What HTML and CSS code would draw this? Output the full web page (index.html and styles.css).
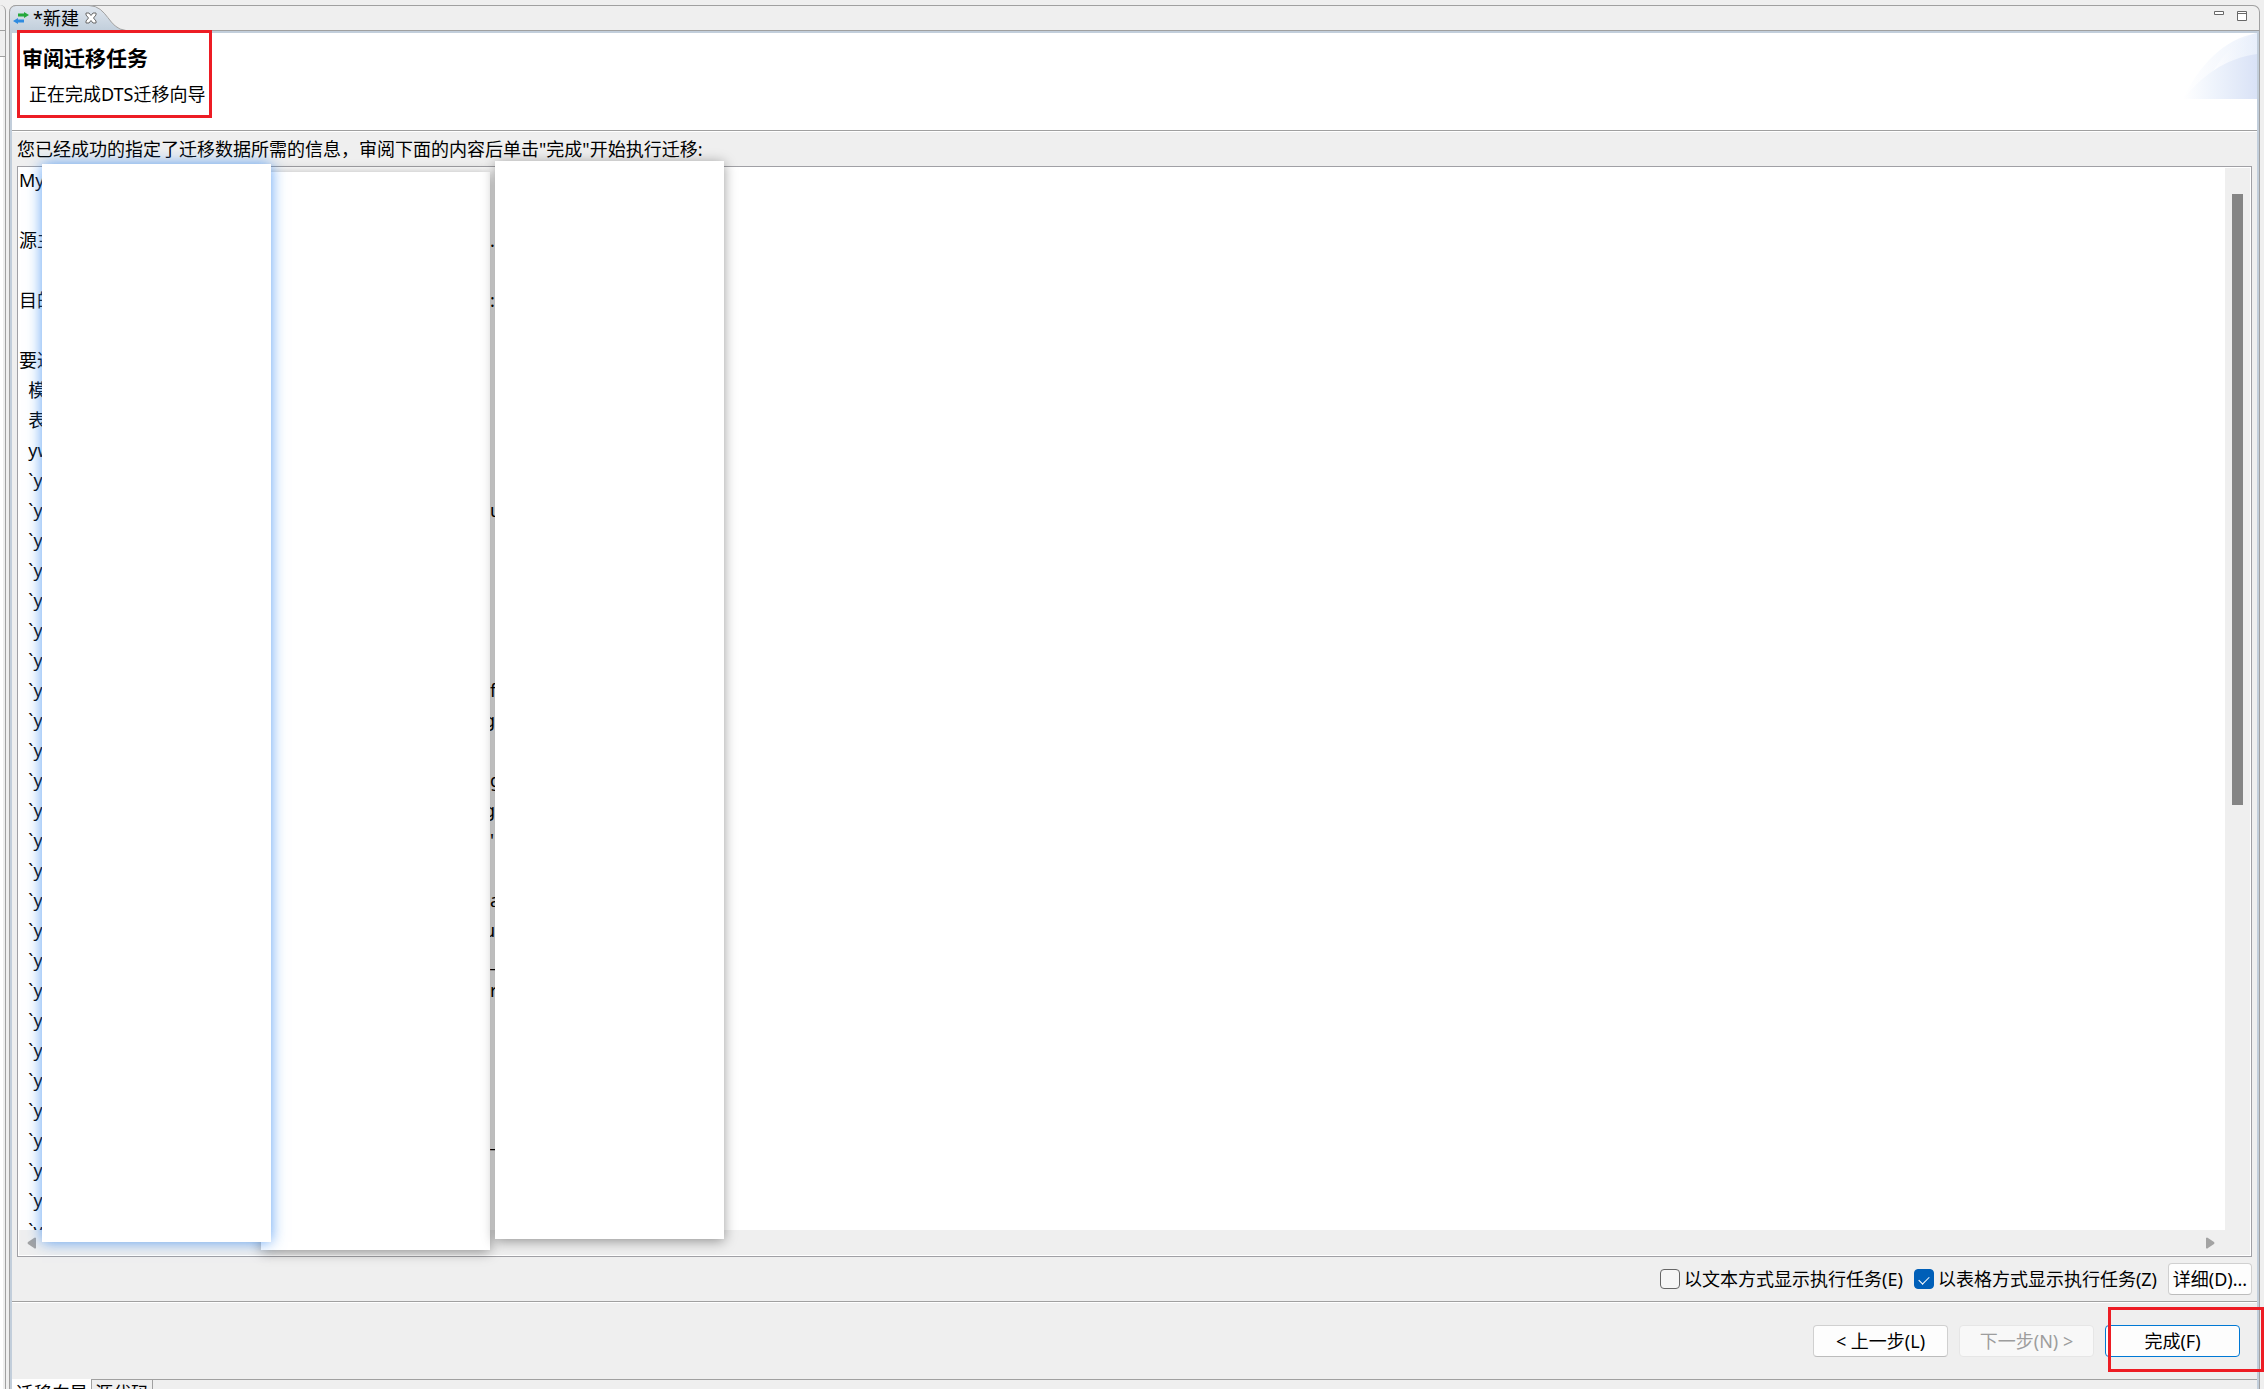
FILE: index.html
```html
<!DOCTYPE html>
<html lang="zh-CN">
<head>
<meta charset="utf-8">
<title>新建</title>
<link rel="stylesheet" href="styles.css">
</head>
<body>
<div class="workbench">
  <aside class="side-view"><div class="side-tabs"></div><div class="side-tools"></div><div class="side-body"></div></aside>
  <main class="editor">
    <div class="tab-bar">
      <div class="tab">
        <svg class="tab-shape" width="120" height="26" viewBox="0 0 120 26" aria-hidden="true">
          <defs><linearGradient id="tabFill" x1="0" y1="0" x2="0" y2="1"><stop offset="0" stop-color="#dfe6ee"/><stop offset="1" stop-color="#c1cedb"/></linearGradient></defs>
          <path d="M0 26V7Q1 1 7 .5H80C99 1 99 24 117 25.500V26Z" fill="url(#tabFill)"/>
          <path d="M.5 26V7Q1 1 7 .5H80C99 1 99 24 117 25.500" fill="none" stroke="#a0a0a0"/>
        </svg>
        <svg class="tab-icon" width="16" height="12" viewBox="0 0 16 12" aria-hidden="true"><path d="M5 1.500H11V0L16 3L11 6V4.500H5Z" fill="#25a83c"/><path d="M11 7.500H5V6L0 9L5 12V10.500H11Z" fill="#2f8be0"/></svg>
        <span class="tab-title">*新建</span>
        <button class="tab-close" aria-label="关闭"><svg width="12" height="12" viewBox="0 0 12 12"><path d="M1 1H4L6 3.500L8 1H11V3L8.500 6L11 9V11H8L6 8.500L4 11H1V9L3.500 6L1 3Z" fill="#fff" stroke="#686868"/></svg></button>
      </div>
      <div class="window-tools">
        <button aria-label="最小化"><svg width="10" height="10" viewBox="0 0 10 10"><path d="M.5.5H9.500V3.500H.5Z" fill="#fff" stroke="#686868"/></svg></button>
        <button aria-label="最大化"><svg width="10" height="10" viewBox="0 0 10 10"><path d="M.5.5H9.500V9.500H.5ZM.5 2.500H9.500" fill="#fff" stroke="#686868"/></svg></button>
      </div>
    </div>
    <div class="page">
      <header class="banner">
        <div class="banner-text">
          <h1>审阅迁移任务</h1>
          <p>正在完成DTS迁移向导</p>
        </div>
        <svg class="banner-art" width="74" height="66" viewBox="0 0 74 66" aria-hidden="true">
          <defs>
            <linearGradient id="artA"><stop offset="0" stop-color="#fff"/><stop offset="1" stop-color="#e4ecfa"/></linearGradient>
            <linearGradient id="artB"><stop offset="0" stop-color="#fff"/><stop offset=".4" stop-color="#eff4fc"/><stop offset="1" stop-color="#d9e2f6"/></linearGradient>
          </defs>
          <path d="M0 66C15 34 40 6 74 0V66Z" fill="url(#artA)" opacity=".7"/>
          <path d="M30 38C42 20 55 5 74 0V66H30Z" fill="url(#artA)" opacity=".6"/>
          <path d="M0 66C18 44 42 25 74 21V66Z" fill="url(#artB)"/>
        </svg>
      </header>
      <section class="content">
        <p class="message" id="summary-label">您已经成功的指定了迁移数据所需的信息，审阅下面的内容后单击"完成"开始执行迁移:</p>
        <div class="summary" role="region" aria-labelledby="summary-label">
          <div class="lines">
            <div class="line">My</div>
            <div class="line"></div>
            <div class="line">源主<span class="tail">.</span></div>
            <div class="line"></div>
            <div class="line">目的<span class="tail">:</span></div>
            <div class="line"></div>
            <div class="line">要迁</div>
            <div class="line">  模</div>
            <div class="line">  表</div>
            <div class="line">  yw</div>
            <div class="line">  `y</div>
            <div class="line">  `y<span class="tail">u</span></div>
            <div class="line">  `y</div>
            <div class="line">  `y</div>
            <div class="line">  `y</div>
            <div class="line">  `y</div>
            <div class="line">  `y</div>
            <div class="line">  `y<span class="tail">f</span></div>
            <div class="line">  `y<span class="tail end">g</span></div>
            <div class="line">  `y</div>
            <div class="line">  `y<span class="tail">g</span></div>
            <div class="line">  `y<span class="tail end">g</span></div>
            <div class="line">  `y<span class="tail">'</span></div>
            <div class="line">  `y</div>
            <div class="line">  `y<span class="tail">a</span></div>
            <div class="line">  `y<span class="tail end">u</span></div>
            <div class="line">  `y<span class="tail">_</span></div>
            <div class="line">  `y<span class="tail">r</span></div>
            <div class="line">  `y</div>
            <div class="line">  `y</div>
            <div class="line">  `y</div>
            <div class="line">  `y</div>
            <div class="line">  `y<span class="tail">_</span></div>
            <div class="line">  `y</div>
            <div class="line">  `y</div>
            <div class="line">  `y</div>
          </div>
          <div class="v-scroll"><div class="v-thumb"></div></div>
          <div class="h-scroll">
            <svg width="9" height="12" viewBox="0 0 9 12" aria-hidden="true"><path d="M9 1V11Q8 12 7 11L1 7Q0 6 1 5L7 1Q8 0 9 1Z" fill="#a3a3a3"/></svg>
            <svg width="9" height="12" viewBox="0 0 9 12" aria-hidden="true"><path d="M0 1V11Q1 12 2 11L8 7Q9 6 8 5L2 1Q1 0 0 1Z" fill="#a3a3a3"/></svg>
          </div>
        </div>
        <div class="options">
          <label><input type="checkbox">以文本方式显示执行任务(E)</label>
          <label><input type="checkbox" checked>以表格方式显示执行任务(Z)</label>
          <button class="btn btn-detail">详细(D)...</button>
        </div>
      </section>
      <footer class="actions">
        <button class="btn">&lt; 上一步(L)</button>
        <button class="btn" disabled>下一步(N) &gt;</button>
        <button class="btn btn-default">完成(F)</button>
      </footer>
      <nav class="page-tabs"><a class="current" href="#wizard">迁移向导</a><a href="#source">源代码</a></nav>
    </div>
  </main>
</div>
<div class="cover cover-middle"></div>
<div class="cover cover-selected"></div>
<div class="cover cover-right"></div>
<div class="mark mark-title"></div>
<div class="mark mark-finish"></div>
</body>
</html>
```
FILE: styles.css
```css
* { box-sizing: border-box; }

body {
  margin: 0;
  height: 100vh;
  overflow: hidden;
  position: relative;
  background: #efefef;
  color: #000;
  font: 18px/30px "Noto Sans", "Noto Sans CJK SC", sans-serif;
}

h1, p { margin: 0; }

button, input { font: inherit; color: inherit; margin: 0; }

.workbench {
  display: flex;
  gap: 3px;
  height: 100vh;
  padding: 5px 4px 0 0;
}

/* neighbouring view, only its right edge is visible */
.side-view {
  flex: 0 0 6px;
  display: flex;
  flex-direction: column;
  border-right: 1px solid #a0a0a0;
  border-top-right-radius: 6px;
}
.side-tabs { height: 26px; border-bottom: 1px solid #a0a0a0; }
.side-tools { height: 26px; border-bottom: 1px solid #a0a0a0; }
.side-body { flex: 1; margin-right: 2px; background: #fff; }

.editor {
  flex: 1;
  min-width: 0;
  display: flex;
  flex-direction: column;
  border: 1px solid #a0a0a0;
  border-bottom: 0;
  border-radius: 7px 7px 0 0;
}

.tab-bar {
  flex: 0 0 25px;
  display: flex;
  justify-content: space-between;
  border-bottom: 1px solid #a0a0a0;
}
.tab {
  position: relative;
  display: flex;
  align-items: center;
  gap: 4px;
  width: 120px;
  padding-left: 3px;
}
.tab-shape { position: absolute; left: -1px; top: -1px; }
.tab-icon, .tab-title, .tab-close { position: relative; }
.tab-title { line-height: 24px; }
.tab-close, .window-tools button {
  display: flex;
  padding: 0;
  border: 0;
  background: none;
}
.tab-close { padding-left: 2px; }
.window-tools { display: flex; gap: 13px; padding: 5px 12px 0 0; align-items: flex-start; }

.page {
  flex: 1;
  min-height: 0;
  display: flex;
  flex-direction: column;
  border: 2px solid #c2cedb;
  border-bottom: 0;
}

.banner {
  flex: 0 0 98px;
  display: flex;
  justify-content: space-between;
  align-items: flex-start;
  background: #fff;
  border-bottom: 1px solid #a0a0a0;
}
.banner-text { padding: 10px; }
.banner-text h1 { font-size: 21px; line-height: 30px; font-weight: 700; }
.banner-text p { padding: 6px 7px; }

.content {
  flex: 1;
  min-height: 0;
  display: flex;
  flex-direction: column;
  padding: 2px 5px 0;
  border-top: 1px solid #fff;
  border-bottom: 1px solid #a0a0a0;
}

.message { padding-bottom: 2px; }

.summary {
  flex: 1;
  min-height: 0;
  display: grid;
  grid-template: minmax(0, 1fr) 25px / minmax(0, 1fr) 25px;
  padding: 1px;
  background: #fff;
  border: 1px solid #a0a0a5;
}
.lines { overflow: hidden; }
.line {
  display: flex;
  height: 30px;
  line-height: 24px;
  white-space: pre;
  position: relative;
}
/* line ends showing between the cover sheets */
.tail {
  position: absolute;
  left: 471px;
  width: 5px;
  overflow: hidden;
}
.tail.end { display: flex; justify-content: flex-end; }

.v-scroll { background: #efefef; padding: 26px 7px 0; }
.v-thumb { height: 59%; background: #858585; }
.h-scroll {
  grid-column: 1 / -1;
  display: flex;
  justify-content: space-between;
  align-items: center;
  padding: 0 35px 0 8px;
  background: #efefef;
}

.options {
  display: flex;
  justify-content: flex-end;
  align-items: center;
  gap: 11px;
  padding: 6px 0;
}
.options label { display: flex; align-items: center; gap: 4px; }
.options input {
  appearance: none;
  width: 20px;
  height: 20px;
  border: 1px solid #666;
  border-radius: 4px;
  background: #f6f6f6;
}
.options input:checked {
  border-color: #005fb8;
  background: #005fb8;
  display: grid;
  place-items: center;
}
.options input:checked::before {
  content: "";
  width: 9px;
  height: 5px;
  border: solid #fff;
  border-width: 0 0 1px 1px;
  transform: rotate(-45deg);
}

.btn {
  width: 135px;
  height: 32px;
  padding: 0;
  line-height: 28px;
  background: #fdfdfd;
  border: 1px solid #d0d0d0;
  border-bottom-color: #bcbcbc;
  border-radius: 4px;
  white-space: nowrap;
}
.btn:disabled { color: #9d9d9d; background: #f8f8f8; border-color: #e6e6e6; }
.btn-default { border-color: #0078d4; }
.btn-detail { width: 84px; }

.actions {
  display: flex;
  justify-content: flex-end;
  gap: 11px;
  padding: 22px 17px;
  border-top: 1px solid #fff;
}

.page-tabs {
  flex: 0 0 10px;
  display: flex;
  overflow: hidden;
}
.page-tabs::after { content: ""; flex: 1; border-top: 1px solid #a0a0a0; }
.page-tabs a {
  height: 30px;
  padding: 0 3px;
  line-height: 26px;
  color: inherit;
  text-decoration: none;
  border: 1px solid #a0a0a0;
}
.page-tabs .current { background: #fff; border-color: #fff; border-right: 0; }

/* sheets laid over the summary */
.cover {
  position: absolute;
  width: 229px;
  height: 1078px;
  background: #fff;
  box-shadow: 0 2px 12px rgba(0, 0, 0, .4);
}
.cover-middle { left: 261px; top: 172px; }
.cover-selected { left: 42px; top: 164px; box-shadow: 0 0 14px rgba(40, 130, 240, .75); }
.cover-right { left: 495px; top: 161px; }

.mark { position: absolute; border: 3px solid #ed1c24; }
.mark-title { left: 17px; top: 30px; width: 195px; height: 88px; }
.mark-finish { right: 0; bottom: 17px; width: 156px; height: 65px; }
```
